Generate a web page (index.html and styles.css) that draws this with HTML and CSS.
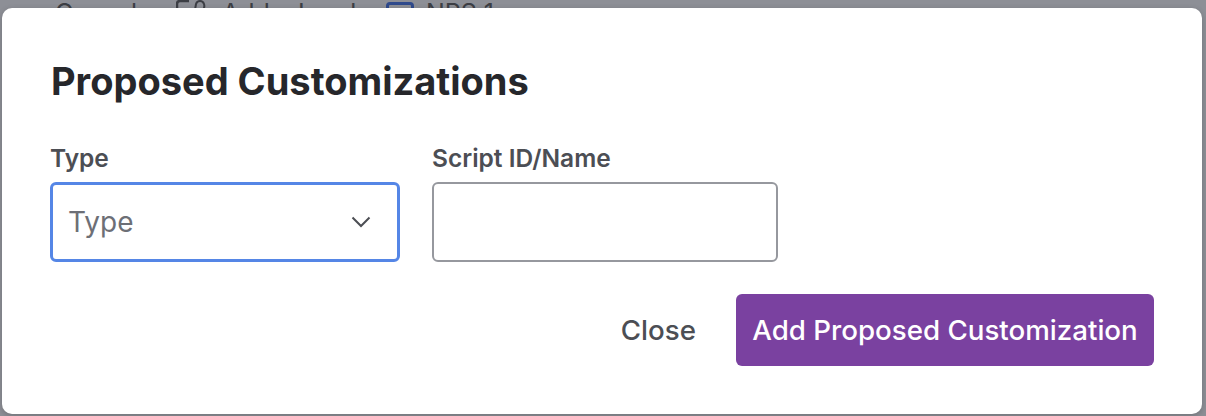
FILE: index.html
```html
<!DOCTYPE html>
<html lang="en">
<head>
    <meta charset="UTF-8">
    <title>Proposed Customizations</title>
    <link rel="stylesheet" href="styles.css">
</head>
<body>
    <div class="behind">
        <span class="behind-text first">Cancel</span>
        <svg class="behind-icon" width="30" height="10" viewBox="0 0 30 10"><path d="M1 10V4q0-3 3-3h9" fill="none" stroke="#3c3e44" stroke-width="2.500"/><path d="M19 10l1-6q1-3 4-3t4 3-1 6" fill="none" stroke="#3c3e44" stroke-width="2"/></svg>
        <span class="behind-text second">Add a Lead</span>
        <span class="behind-box"></span>
        <span class="behind-text">NPS 1</span>
    </div>
    <section class="modal">
        <h1 class="title">Proposed Customizations</h1>
        <div class="fields">
            <div class="field">
                <label class="label">Type</label>
                <div class="select">
                    <span class="placeholder">Type</span>
                    <svg class="chevron" width="20" height="12" viewBox="0 0 20 12"><path d="M1.500 1.500 10 10l8.500-8.500" fill="none" stroke="#4c4e54" stroke-width="2"/></svg>
                </div>
            </div>
            <div class="field">
                <label class="label">Script ID/Name</label>
                <div class="input"></div>
            </div>
        </div>
        <div class="actions">
            <button class="close" type="button">Close</button>
            <button class="add" type="button">Add Proposed Customization</button>
        </div>
    </section>
</body>
</html>
```

FILE: styles.css
```css
html, body {
    height: 100%;
}

body {
    margin: 0;
    padding: 0 4px 2px 2px;
    box-sizing: border-box;
    overflow: hidden;
    background-color: #8d8f96;
    font-family: "Inter", "Liberation Sans", sans-serif;
    display: flex;
    flex-direction: column;
}

.behind {
    height: 8px;
    display: flex;
    padding-left: 53px;
    overflow: hidden;
    flex-shrink: 0;
}

.behind-text {
    font-size: 25px;
    line-height: 25px;
    margin-top: 1px;
    color: #3c3e44;
    white-space: nowrap;
}

.first {
    width: 121px;
}

.behind-icon {
    flex-shrink: 0;
}

.second {
    width: 164px;
    margin-left: 16px;
}

.behind-box {
    width: 28px;
    height: 26px;
    margin-top: 2px;
    box-sizing: border-box;
    border: 3px solid #2f4a8c;
    border-radius: 4px;
    flex-shrink: 0;
    margin-right: 12px;
}

.modal {
    flex: 1;
    background-color: #ffffff;
    border-radius: 10px;
    box-shadow: 0 2px 6px rgba(0, 0, 0, 0.2);
    padding: 48px 48px 0 48px;
}

.title {
    margin: 0 0 0 1px;
    font-size: 38px;
    line-height: 50px;
    font-weight: 700;
    color: #26272b;
}

.fields {
    display: flex;
    gap: 32px;
    margin-top: 38px;
}

.label {
    display: block;
    font-size: 24.5px;
    line-height: 28px;
    font-weight: 600;
    color: #4c4e54;
    margin-bottom: 10px;
}

.select {
    width: 350px;
    height: 80px;
    box-sizing: border-box;
    border: 3px solid #5586e6;
    border-radius: 6px;
    display: flex;
    align-items: center;
    justify-content: space-between;
    padding: 0 26px 0 15px;
}

.placeholder {
    font-size: 28px;
    color: #6d6f76;
}

.input {
    width: 346px;
    height: 80px;
    box-sizing: border-box;
    border: 2px solid #96989e;
    border-radius: 6px;
}

.actions {
    display: flex;
    justify-content: flex-end;
    align-items: center;
    gap: 40px;
    margin-top: 32px;
}

.close {
    border: 0;
    padding: 0;
    background: none;
    font-family: inherit;
    font-size: 27.7px;
    font-weight: 500;
    color: #4c4e54;
}

.add {
    width: 418px;
    height: 72px;
    border: 0;
    border-radius: 6px;
    background-color: #7a41a0;
    color: #ffffff;
    font-family: inherit;
    font-size: 27.7px;
    font-weight: 500;
}
```
